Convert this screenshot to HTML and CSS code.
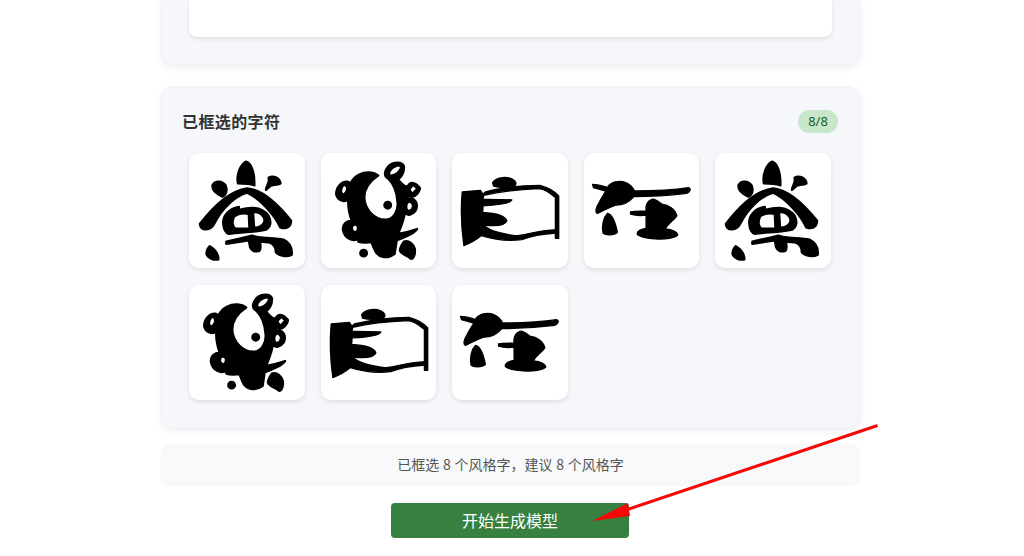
FILE: index.html
```html
<!DOCTYPE html>
<html lang="zh">
<head>
<meta charset="utf-8">
<title>已框选的字符</title>
<link rel="stylesheet" href="styles.css">
</head>
<body>
<svg class="defs" width="0" height="0" aria-hidden="true">
  <defs>
    <symbol id="g-cha" viewBox="0 0 348 348">
      <path d="M172 26C186 30 198 55 197 98C180 92 160 92 147 92C142 65 155 35 172 26Z"/>
      <path d="M70 98C78 82 100 84 110 98C116 112 112 128 100 132C85 125 68 115 70 98Z"/>
      <path d="M240 75C255 65 275 78 276 92C265 98 250 95 245 100L232 112C232 100 245 90 240 75Z"/>
      <path d="M32 215C70 165 120 115 175 107C230 112 280 170 308 205C308 222 295 232 275 225C260 190 215 138 175 120C140 130 100 165 75 215C65 235 35 238 32 215Z"/>
      <path fill-rule="evenodd" d="M103 215C100 190 120 168 150 163L150 172C170 167 215 155 240 190C250 210 245 225 232 232C200 240 150 240 120 245C108 240 104 230 103 215ZM136 192C128 205 130 224 140 229L182 229L180 184C165 181 148 182 136 192ZM193 180L196 226C214 226 226 216 228 205C226 188 212 176 193 180Z"/>
      <path d="M112 268C140 262 170 255 190 250L210 255C235 258 262 258 285 262C305 272 312 290 310 308C295 316 272 312 262 300C262 285 255 275 240 270L214 268C216 280 218 290 212 296C200 300 188 298 184 285L180 264C155 268 130 272 112 275Z"/>
      <path d="M62 282C75 290 88 305 88 322C75 325 55 318 52 305C52 295 56 288 62 282Z"/>
    </symbol>
    <symbol id="g-le" viewBox="0 0 348 348">
      <path fill-rule="evenodd" d="M115 65C135 55 160 58 172 68C146 85 130 110 130 135C132 175 165 203 195 202C219 200 233 175 231 150C229 120 220 95 203 78C188 70 190 55 205 38C220 26 245 25 250 40C252 60 240 75 232 80C245 95 255 105 262 100C268 88 280 85 298 105C300 115 285 135 272 132L262 130C262 135 260 140 270 138C285 138 295 155 285 175C275 188 262 190 252 182C250 205 240 225 232 245C260 240 275 235 290 230C285 245 250 255 228 265L222 305C200 322 170 318 160 290L152 270C135 272 122 272 112 268L115 258C95 270 70 260 65 230C65 215 75 205 92 205C85 185 80 160 82 140C70 150 50 145 45 125C45 105 60 85 80 87C90 90 88 95 90 90C95 78 105 70 115 65ZM67 96C56 110 58 126 69 126C82 114 82 96 67 96ZM100 216C88 222 91 242 107 239C114 228 112 216 100 216ZM228 38C208 46 201 60 208 69C228 69 244 50 241 38ZM278 96L266 110L275 124L291 108ZM265 146C254 153 254 174 265 176C279 172 284 153 265 146Z"/>
      <circle cx="201" cy="158" r="10"/>
      <circle cx="128" cy="303" r="10"/>
      <path d="M250 268C265 262 278 275 283 290C285 305 280 320 272 320C258 310 240 305 238 295C238 285 245 275 250 268Z"/>
    </symbol>
    <symbol id="g-xuan" viewBox="0 0 348 348">
      <path d="M122 90C130 75 160 70 180 78C195 85 195 95 188 100C170 105 140 105 125 100Z"/>
      <path d="M30 118L85 113L93 125L100 118C150 105 200 98 265 98C290 105 310 115 322 130L322 258L312 258L312 135C295 120 280 110 262 108C210 110 150 115 95 128L93 140C120 142 160 140 180 142C175 155 130 158 93 160L92 180C125 182 160 190 165 205C160 220 130 222 95 218C110 235 150 245 190 250C220 250 250 235 315 232L315 242C270 245 240 250 210 262C170 268 120 260 88 250C70 265 50 275 35 280C28 230 25 170 30 118Z"/>
    </symbol>
    <symbol id="g-zai" viewBox="0 0 348 348">
      <path d="M25 95C40 95 55 100 70 104C80 88 105 82 122 88C135 92 148 105 152 115C200 115 270 112 315 105C325 108 320 118 310 122C260 128 200 132 150 132C135 150 115 158 95 158C75 165 55 175 40 183C32 180 35 165 45 150C50 138 60 125 65 115L28 105Z"/>
      <path d="M70 183C85 185 95 215 100 240C90 250 65 250 57 243C52 220 58 195 70 183Z"/>
      <path d="M140 178C155 175 175 176 187 176C185 160 190 145 205 140C215 138 225 148 235 155C255 158 275 170 280 190C270 205 255 210 245 230C265 232 280 238 283 248C275 258 245 262 215 260C190 258 165 255 160 245C160 235 175 230 187 228L187 188C170 190 150 188 140 185Z"/>
    </symbol>
  </defs>
</svg>

<main class="page">
  <section class="card card-top">
    <div class="canvas"></div>
  </section>

  <section class="card card-selected">
    <header class="card-head">
      <h2 class="card-title">已框选的字符</h2>
      <span class="badge">8/8</span>
    </header>
    <div class="char-grid">
      <div class="char-cell"><svg class="glyph"><use href="#g-cha"/></svg></div>
      <div class="char-cell"><svg class="glyph"><use href="#g-le"/></svg></div>
      <div class="char-cell"><svg class="glyph glyph-thin"><use href="#g-xuan"/></svg></div>
      <div class="char-cell"><svg class="glyph glyph-thin"><use href="#g-zai"/></svg></div>
      <div class="char-cell"><svg class="glyph"><use href="#g-cha"/></svg></div>
      <div class="char-cell"><svg class="glyph"><use href="#g-le"/></svg></div>
      <div class="char-cell"><svg class="glyph glyph-thin"><use href="#g-xuan"/></svg></div>
      <div class="char-cell"><svg class="glyph glyph-thin"><use href="#g-zai"/></svg></div>
    </div>
  </section>

  <p class="status">已框选 8 个风格字，建议 8 个风格字</p>

  <div class="actions">
    <button class="primary" type="button">开始生成模型</button>
  </div>
</main>

<svg class="annotation" viewBox="0 0 1024 556" aria-hidden="true">
  <path class="arrow-line" d="M877.500 425.500L626 510"/>
  <path class="arrow-head" d="M592 521L628 503L630 516Z"/>
</svg>
</body>
</html>
```

FILE: styles.css
```css
* { box-sizing: border-box; }

html, body {
  margin: 0;
  padding: 0;
  height: 556px;
  overflow: hidden;
  background: #fff;
}

body {
  position: relative;
  font-family: "Noto Sans CJK SC", "Liberation Sans", sans-serif;
  color: #333;
}

.defs { position: absolute; }

.page {
  width: 699px;
  margin-left: 161px;
  display: flex;
  flex-direction: column;
}

.card {
  background: #f5f7fb;
  border: 1px solid #eef0f5;
  border-radius: 12px;
  box-shadow: 0 2px 8px rgba(0, 0, 0, 0.07);
}

.card-top {
  height: 65px;
  padding: 0 27px;
  border-top: 0;
  border-top-left-radius: 0;
  border-top-right-radius: 0;
}

.canvas {
  height: 37px;
  background: #fff;
  border-radius: 0 0 8px 8px;
  box-shadow: 0 2px 4px rgba(0, 0, 0, 0.1);
}

.card-selected {
  height: 342px;
  margin-top: 22px;
  padding: 21px 21px 0 20px;
}

.card-head {
  display: flex;
  align-items: center;
  justify-content: space-between;
  height: 24px;
}

.card-title {
  margin: 0;
  font-size: 16px;
  line-height: 24px;
  font-weight: 700;
  letter-spacing: 0.4px;
  color: #333;
}

.badge {
  width: 40px;
  height: 23px;
  border-radius: 12px;
  background: #c8e6c9;
  color: #1f5c2e;
  font-size: 13px;
  font-weight: 400;
  line-height: 23px;
  text-align: center;
  font-family: "Noto Sans", sans-serif;
}

.char-grid {
  display: grid;
  grid-template-columns: repeat(5, 1fr);
  gap: 17px 16px;
  margin: 20px 7px 0;
}

.char-cell {
  height: 115px;
  background: #fff;
  border-radius: 10px;
  box-shadow: 0 2px 5px rgba(0, 0, 0, 0.1);
}

.glyph {
  display: block;
  width: 100%;
  height: 100%;
  fill: #000;
  stroke: #000;
  stroke-width: 7px;
  stroke-linejoin: round;
}

.glyph-thin { stroke-width: 4px; }

.status {
  height: 41px;
  margin: 15px 0 0;
  background: #f8f9fa;
  border-radius: 8px;
  box-shadow: 0 1px 3px rgba(0, 0, 0, 0.03);
  font-size: 14px;
  line-height: 41px;
  word-spacing: 0.6px;
  text-align: center;
  color: #555;
}

.actions {
  display: flex;
  justify-content: center;
  margin-top: 18px;
}

.primary {
  width: 238px;
  height: 35px;
  margin-right: 1px;
  padding: 0;
  border: 0;
  border-radius: 4px;
  background: #388040;
  color: #fff;
  font: 16px/35px "Noto Sans CJK SC", sans-serif;
}

.annotation {
  position: absolute;
  left: 0;
  top: 0;
  width: 1024px;
  height: 556px;
  pointer-events: none;
}

.arrow-line {
  fill: none;
  stroke: #f60808;
  stroke-width: 3px;
}

.arrow-head { fill: #f60808; }
```
